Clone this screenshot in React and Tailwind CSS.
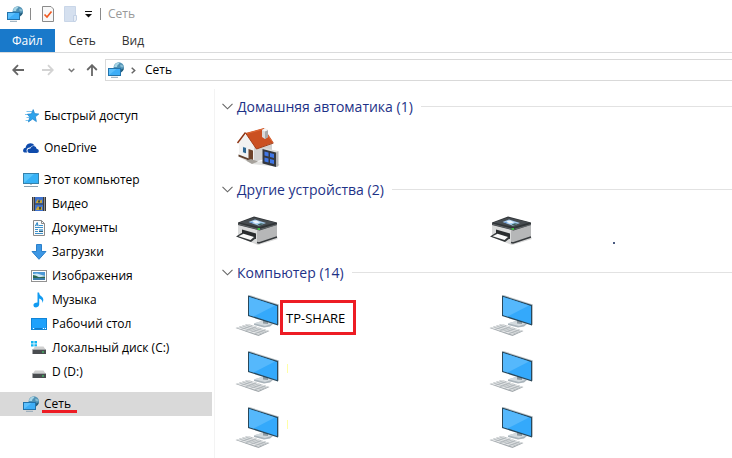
import clsx from 'clsx';

/* ── Small icons, 16×16 ── */

function NetworkIcon() {
  return (
    <svg viewBox="0 0 16 16" className="h-4 w-4 shrink-0" aria-hidden="true">
      <circle cx="10.8" cy="5.4" r="5.2" fill="#4f90b3" />
      <path d="M6.4 3.2Q8 .6 10.6 .4L11.4 1.8 9.6 3 9 5H6Z" fill="#a9d6e6" />
      <path d="M12.4 2.4 14.4 3 15.6 5 13.8 5.4 12.2 4.2Z" fill="#86bcd3" />
      <path d="M13 7.4 15.9 6.2 15 8.8 13 10.4Z" fill="#27617f" />
      <rect x="0.5" y="6.5" width="12" height="7" fill="#5cc0fd" stroke="#2273ab" />
      <path d="M1 13 8.5 7H12V13Z" fill="#3eaef7" />
      <path d="M3 15.3H10" stroke="#8fa6b6" />
    </svg>
  );
}

function StarIcon() {
  return (
    <svg viewBox="0 0 16 16" className="h-4 w-4 shrink-0" aria-hidden="true">
      <path d="M3.5 3.5H9M2 6.5H6M3.5 9.5H6.5M2.6 12.5H6" stroke="#7cc3ee" />
      <path d="M10.2 1.6 11.6 5.6 15.8 6 12.4 8.8 13.4 13.6 9.6 11 5.4 14 6.8 9.2 4.4 6.2 8.4 5.8Z" fill="#2ea3ec" stroke="#1b83cb" strokeWidth=".7" />
    </svg>
  );
}

function CloudIcon() {
  return (
    <svg viewBox="0 0 16 16" className="h-4 w-4 shrink-0" aria-hidden="true">
      <path d="M1.4 12.6Q-.3 11.8 .2 9.8 .7 8 2.6 7.8 3 4.2 6.2 3.4 9.6 2.6 11.6 5.6 8.8 4.8 7.2 7.4 4 7.2 3.6 10.2 3.5 11.6 4.2 12.6Z" fill="#0f4bab" />
      <path d="M6.4 13Q4.4 12.8 4.4 10.8 4.6 8.4 7.4 8.4 8.4 5.6 11 6 13.4 6.4 13.6 8.8 15.8 9 15.9 11 15.8 13 13.8 13Z" fill="#0f4bab" />
    </svg>
  );
}

function ComputerIcon() {
  return (
    <svg viewBox="0 0 16 16" className="h-4 w-4 shrink-0" aria-hidden="true">
      <rect x="0.5" y="1.5" width="15" height="10" fill="#58c4fb" stroke="#3581ab" />
      <path d="M1 11 11 2H15V11Z" fill="#36b1f6" />
      <path d="M7 12H9V13H7Z" fill="#b5c3cc" />
      <path d="M1 14.5H15" stroke="#8ba0ae" />
    </svg>
  );
}

function VideoIcon() {
  return (
    <svg viewBox="0 0 16 16" className="h-4 w-4 shrink-0" aria-hidden="true">
      <path d="M1 1H15V15H1Z" fill="#3b3b3b" />
      <path d="M4 1H12V7.5H4Z" fill="#3e72ce" />
      <path d="M4 8.5H12V15H4Z" fill="#3e72ce" />
      <path d="M2.5 1.5V15M13.5 1.5V15" stroke="#e4e4e4" strokeDasharray="1 1" />
      <path d="M5 6 7 3 8.5 5 11 3.5V7H5Z" fill="#c5a53c" />
      <path d="M5 13 7 10 9 12 11 10.5V14H5Z" fill="#c5a53c" />
      <path d="M7 4.5H9V6.5H7ZM8 11H10V13.5H8Z" fill="#3f4a3a" />
    </svg>
  );
}

function DocumentsIcon() {
  return (
    <svg viewBox="0 0 16 16" className="h-4 w-4 shrink-0" aria-hidden="true">
      <path d="M2.5 .5H10.5L13.5 3.5V15.5H2.5Z" fill="#fbfbfb" stroke="#8a8a8a" />
      <path d="M10.5 .5V3.5H13.5" fill="none" stroke="#8a8a8a" />
      <path d="M4.2 6.2 6.2 2.5 7.2 6.2M5 5H7" fill="none" stroke="#2f87c4" />
      <path d="M8 5.5H12M4 7.5H12M4 9.5H7M4 11.5H7M4 13.5H12" stroke="#3d92cc" />
      <path d="M8 9H12V12H8Z" fill="#79b5dc" />
      <path d="M8 11H12V12H8Z" fill="#2c5c77" />
    </svg>
  );
}

function DownloadsIcon() {
  return (
    <svg viewBox="0 0 16 16" className="h-4 w-4 shrink-0" aria-hidden="true">
      <path d="M5.5 .5H10.5V7.5H15L8 15.3 1 7.5H5.5Z" fill="#3d97e4" stroke="#2b80cb" />
    </svg>
  );
}

function PicturesIcon() {
  return (
    <svg viewBox="0 0 16 16" className="h-4 w-4 shrink-0" aria-hidden="true">
      <rect x="0.5" y="2.5" width="15" height="11" fill="#fff" stroke="#929292" />
      <path d="M2 4H14V12H2Z" fill="#4d99d6" />
      <path d="M2 6 6 5.5 14 8V9H2Z" fill="#cde6f4" />
      <path d="M2 7Q5 7.2 8 9.2L14 8.6V10H2Z" fill="#2c6750" />
      <path d="M2 10H14V12H2Z" fill="#3c7ca9" />
    </svg>
  );
}

function MusicIcon() {
  return (
    <svg viewBox="0 0 16 16" className="h-4 w-4 shrink-0" aria-hidden="true">
      <path d="M6.5 .5H8Q8.2 3 10.6 4.6 13.6 7 11.4 11 11.8 7.8 8.2 6.6V12.6Q8 15 5 15.4 2.4 15.4 2.4 13.2 2.6 11 6.5 10.6Z" fill="#129bf1" />
    </svg>
  );
}

function DesktopIcon() {
  return (
    <svg viewBox="0 0 16 16" className="h-4 w-4 shrink-0" aria-hidden="true">
      <rect x="0.5" y="2.5" width="15" height="11" fill="#1ea1fb" stroke="#1184d6" />
      <path d="M2 12.5H3M12 12.5H13M14 12.5H15" stroke="#fff" />
      <path d="M4 12.5H11" stroke="#1479c4" />
    </svg>
  );
}

function DiskIcon({ system = false }) {
  return (
    <svg viewBox="0 0 16 16" className="h-4 w-4 shrink-0" aria-hidden="true">
      {system && <path d="M0 1H2.6V3.4H0ZM3.4 1H6V3.4H3.4ZM0 4.2H2.6V6.6H0ZM3.4 4.2H6V6.6H3.4Z" fill="#12b4f2" />}
      <path d="M4 6.5H12.5L15 10H1.5Z" fill="#d0d0d0" />
      <path d="M1.5 9.5H15V14H1.5Z" fill="#4a4d50" />
      <path d="M1.5 9.5H15" stroke="#a5a8aa" />
      <path d="M11 11.5H13V12.5H11Z" fill="#3fe06b" />
    </svg>
  );
}

/* ── Large tile icons ── */

function HouseIcon() {
  return (
    <svg viewBox="-2 0 48 48" className="h-12 w-12 shrink-0" aria-hidden="true">
      <path d="M3 33 19 39 38 37 46 42 36 43 18 41Z" fill="#e2e2e0" />
      <path d="M5 19 11 11 22 24 20 39 5 33Z" fill="#f1f1f0" />
      <path d="M20 23 38 19 38 34 20 39Z" fill="#d2d2d1" />
      <path d="M4.5 31.5 20 37.5V39.5L4.5 33.5Z" fill="#5f402d" />
      <path d="M11.5 10 30 5 39.5 19.5 22.5 26Z" fill="#cb5021" />
      <path d="M13 10.5 29.5 6 38 18.5" fill="none" stroke="#de6a38" />
      <path d="M11.5 9.5 3.5 20" stroke="#8c3211" strokeWidth="1.4" />
      <path d="M11.5 10 22.5 26 39.5 20" fill="none" stroke="#a33d16" />
      <path d="M28 7 31 5.5 34 7V14L31 16 28 14Z" fill="#dadada" />
      <path d="M31 8 34 7V14L31 16Z" fill="#a9a9a9" />
      <path d="M28 7 31 5.5 34 7 31 8.5Z" fill="#f7f7f7" />
      <path d="M8.5 23.5 12.5 24.5V31L8.5 29.5Z" fill="#2d6590" stroke="#fff" strokeWidth=".8" />
      <path d="M14.5 26 19 27.5V37.5L14.5 36Z" fill="#6d432b" />
      <path d="M12 37.5 17 36 24 38.5 18 41Z" fill="#a6a29c" />
      <path d="M30 25 44 28V43.5L42 44 29 41Z" fill="#dededc" />
      <path d="M28.5 26 42 29.5V44L28.5 40.5Z" fill="#34383f" />
      <path d="M42 29.5 44.5 28V43L42 44Z" fill="#b5b5b5" />
      <path d="M30.5 28.5 34.5 29.5V33.5L30.5 32.5ZM36 30 40 31V35L36 34ZM30.5 34.5 34.5 35.5V39.5L30.5 38.5ZM36 36 40 37V41L36 40Z" fill="#3f76e6" />
    </svg>
  );
}

function PrinterIcon() {
  return (
    <svg viewBox="0 0 48 48" className="h-12 w-12 shrink-0" aria-hidden="true">
      <path d="M6 31 26 39 46 33 44 31Z" fill="#d8d8d8" />
      <path d="M6 18 25 23V37L6 31Z" fill="#dadbdb" />
      <path d="M25 23 45 18V31L27 37H25Z" fill="#b6b7b8" />
      <path d="M25 36.5 27 37 45 31" fill="none" stroke="#35393c" strokeWidth="1.6" />
      <path d="M6 16.5 22 10.5 45 16.5V19L27.5 24.5 6 19Z" fill="#303437" />
      <path d="M7.5 16.5 22 11.5 43.5 16.5 27.5 21Z" fill="#474c50" />
      <path d="M6 18 27.5 23.5 45 18.5" fill="none" stroke="#81868a" strokeWidth=".6" />
      <path d="M16.5 16 23 13.6 34 17 27 19.8Z" fill="#a5caed" />
      <path d="M20.5 15.2 24.5 14.4 28 16.6 23.5 17.6Z" fill="#edf6fd" />
      <path d="M25.5 18.6 29 17.2 32 17.8 27.5 19.4Z" fill="#3e615d" />
      <path d="M18 16 21 16.4 20 17.2Z" fill="#4176c6" />
      <path d="M25.5 22H28V24H25.5Z" fill="#40b947" />
      <path d="M10 23.5 24 27.5V33L10 29Z" fill="#292c2e" />
      <path d="M4 30.5 9.5 27 23.5 31V32.5L19 36Z" fill="#34383a" />
      <path d="M6.5 30.3 11.5 27.8 22 31 18.5 34Z" fill="#fafafa" />
    </svg>
  );
}

function WorkstationIcon() {
  return (
    <svg viewBox="0 0 48 48" className="h-12 w-12 shrink-0" aria-hidden="true">
      <path d="M22 34.5 30 32 41 35 38 37.5 32 38.5 22 36Z" fill="#aab4bb" />
      <path d="M22 34.3 30 32 41 34.5 33 37Z" fill="#d3dade" />
      <path d="M31 30 36 31.5V35L31 34.5Z" fill="#8e9aa1" />
      <path d="M16 6.5 17.5 6 47 15.5V35.5L45.5 36.5Z" fill="#bcc3c7" />
      <path d="M16 6.5 46 16V36.5L16 27Z" fill="#29485b" />
      <path d="M17 8 45 17V35L17 26Z" fill="#34a9fb" />
      <path d="M17 8 43 16.4 21.5 27.4 17 26Z" fill="#55b8fc" />
      <path d="M3.5 39 16 35 37.5 42 26.5 47Z" fill="#a3a9ad" />
      <path d="M4.5 38.8 16 35 36.5 41.8 26.5 45.8Z" fill="#e6e8e9" />
      <path d="M7.5 38 29.5 44.7M10.5 37 32 43.7M13.5 36 34.5 42.7M9 40.5 20 36.5M13.5 42 24.5 38M18 43.5 29 39.5M22.5 45 33.5 41" fill="none" stroke="#a6adb2" strokeWidth=".7" />
    </svg>
  );
}

/* ── Data ── */

const tree = [
  [{ label: 'Быстрый доступ', icon: <StarIcon /> }],
  [{ label: 'OneDrive', icon: <CloudIcon /> }],
  [
    { label: 'Этот компьютер', icon: <ComputerIcon /> },
    { label: 'Видео', icon: <VideoIcon />, nested: true },
    { label: 'Документы', icon: <DocumentsIcon />, nested: true },
    { label: 'Загрузки', icon: <DownloadsIcon />, nested: true },
    { label: 'Изображения', icon: <PicturesIcon />, nested: true },
    { label: 'Музыка', icon: <MusicIcon />, nested: true },
    { label: 'Рабочий стол', icon: <DesktopIcon />, nested: true },
    { label: 'Локальный диск (C:)', icon: <DiskIcon system />, nested: true },
    { label: 'D (D:)', icon: <DiskIcon />, nested: true },
  ],
  [{ label: 'Сеть', icon: <NetworkIcon />, selected: true }],
];

const groups = [
  { title: 'Домашняя автоматика (1)', Icon: HouseIcon, items: [{}] },
  { title: 'Другие устройства (2)', Icon: PrinterIcon, items: [{}, { dot: true }] },
  {
    title: 'Компьютер (14)',
    Icon: WorkstationIcon,
    items: [{ name: 'TP-SHARE' }, {}, { mark: true }, {}, { mark: true }, {}],
  },
];

/* ── Window parts ── */

function TitleBar() {
  return (
    <header className="flex h-[29px] items-center pr-2 pb-px pl-[7px] text-[#999]">
      <NetworkIcon />
      <span className="ml-[7px] h-3 w-px bg-[#8a8a8a]" />
      <button className="ml-[11px]" aria-label="Свойства">
        <svg viewBox="0 0 12 16" className="h-4 w-3">
          <path d="M.5 .5H9L11.5 3V15.5H.5Z" fill="#f8f8f8" stroke="#8b8b8b" />
          <path d="M2.5 8.5 5 11 9.5 5.5" fill="none" stroke="#f15a22" strokeWidth="1.7" />
        </svg>
      </button>
      <button className="ml-[10px]" aria-label="Новая папка">
        <svg viewBox="0 0 13 16" className="h-4 w-[13px]">
          <path d="M.5 .5H11.5V15.5H.5Z" fill="#d5e0ef" stroke="#c9d6e8" />
          <path d="M9.5 9.5H12.5V14L11 15.5H9.5Z" fill="#e6edf6" stroke="#c3d1e5" />
        </svg>
      </button>
      <button className="ml-2" aria-label="Настройка панели быстрого доступа">
        <svg viewBox="0 0 7 7" className="h-[7px] w-[7px]">
          <path d="M0 .5H7" stroke="#111" />
          <path d="M0 3H7L3.5 6.5Z" fill="#111" />
        </svg>
      </button>
      <span className="ml-2 h-3 w-px bg-[#8a8a8a]" />
      <h1 className="ml-[7px]">Сеть</h1>
    </header>
  );
}

function Ribbon() {
  return (
    <nav className="flex h-6 gap-[2px] border-b border-[#dadbdc] text-[#333]">
      <button className="bg-[#1979ca] px-3 text-white">Файл</button>
      <button className="px-3">Сеть</button>
      <button className="px-3">Вид</button>
    </nav>
  );
}

function AddressBar() {
  return (
    <div className="flex items-center py-[6px] pl-3">
      <button aria-label="Назад">
        <svg viewBox="0 0 12 12" className="h-3 w-3" fill="none" stroke="#666" strokeWidth="1.8">
          <path d="M12 6H1M6 1.2 1.2 6 6 10.8" />
        </svg>
      </button>
      <button className="ml-[18px]" aria-label="Вперед" disabled>
        <svg viewBox="0 0 12 12" className="h-3 w-3" fill="none" stroke="#d3d3d3" strokeWidth="1.8">
          <path d="M0 6H11M6 1.2 10.8 6 6 10.8" />
        </svg>
      </button>
      <button className="ml-[14px]" aria-label="Последние расположения">
        <svg viewBox="0 0 7 5" className="h-[5px] w-[7px]" fill="none" stroke="#777" strokeWidth="1.5">
          <path d="M.7 .7 3.5 3.5 6.3 .7" />
        </svg>
      </button>
      <button className="ml-[11px]" aria-label="Вверх">
        <svg viewBox="0 0 12 12" className="h-3 w-3" fill="none" stroke="#666" strokeWidth="1.8">
          <path d="M6 12V1M1.2 6 6 1.2 10.8 6" />
        </svg>
      </button>
      <div className="ml-[7px] flex h-[22px] flex-1 items-center border border-r-0 border-[#d9d9d9] pl-[2px]">
        <NetworkIcon />
        <svg viewBox="0 0 5 7" className="ml-[7px] h-[7px] w-[5px]" fill="none" stroke="#666" strokeWidth="1.5" aria-hidden="true">
          <path d="M.7 .7 3.7 3.5 .7 6.3" />
        </svg>
        <button className="ml-[9px]">Сеть</button>
      </div>
    </div>
  );
}

function Sidebar() {
  return (
    <aside className="flex w-[215px] shrink-0 flex-col gap-2 border-r border-[#f3f3f3] pt-[15px] pr-[2px]">
      {tree.map((section) => (
        <ul key={section[0].label}>
          {section.map(({ label, icon, nested, selected }) => (
            <li key={label}>
              <button
                className={clsx(
                  'flex h-6 w-full items-center gap-[5px] whitespace-nowrap',
                  nested ? 'pl-[31px]' : 'pl-[23px]',
                  selected && 'bg-[#d9d9d9]'
                )}
              >
                {icon}
                <span className="relative">
                  {label}
                  {selected && <span className="absolute -right-[6px] -bottom-px -left-[2px] h-[3px] bg-[#ed1c24]" />}
                </span>
              </button>
            </li>
          ))}
        </ul>
      ))}
    </aside>
  );
}

function Group({ title, Icon, items }) {
  return (
    <section>
      <h2 className="flex h-[27px] items-center text-[14px] text-[#1e3287]">
        <svg viewBox="0 0 11 7" className="mr-1 h-[7px] w-[11px]" fill="none" stroke="#666" strokeWidth="1.1" aria-hidden="true">
          <path d="M.5 .8 5.5 5.8 10.5 .8" />
        </svg>
        {title}
        <span className="ml-2 h-px flex-1 bg-[#e2e2e2]" />
      </h2>
      <ul className="grid grid-cols-2 gap-x-2 pl-[10px]">
        {items.map(({ name, mark, dot }, idx) => (
          <li key={idx} className="relative flex h-14 items-center pb-[2px]">
            <Icon />
            {name && (
              <span className="mt-[9px] flex h-[35px] w-[76px] items-center border-3 border-[#ed1c24] pl-[3px] text-[13px] whitespace-nowrap">
                {name}
              </span>
            )}
            {mark && <span className="absolute top-[22px] left-[55px] h-[9px] w-px bg-[#ffffa8]" />}
            {dot && <span className="absolute top-[39px] left-[127px] h-[2px] w-[2px] bg-[#4a5a80]" />}
          </li>
        ))}
      </ul>
    </section>
  );
}

export default function App() {
  return (
    <div className="flex min-h-screen flex-col bg-white font-['Open_Sans',sans-serif] text-[12px] leading-4 text-black">
      <TitleBar />
      <Ribbon />
      <AddressBar />
      <div className="flex flex-1 border-t-2 border-white">
        <Sidebar />
        <main className="min-w-0 flex-1 pt-1 pl-[7px]">
          {groups.map((group) => (
            <Group key={group.title} {...group} />
          ))}
        </main>
      </div>
    </div>
  );
}
